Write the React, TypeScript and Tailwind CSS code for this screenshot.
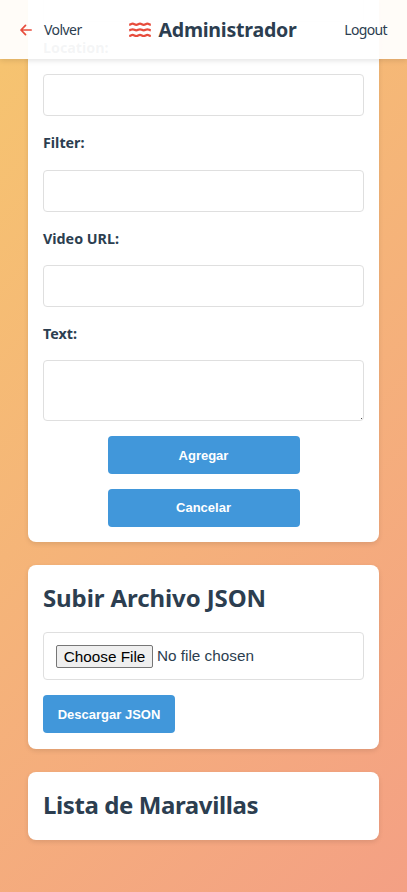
import React from "react";

const wave = "M0.2 2.8 C1.6 2.6 2.2 1.7 3.7 1.7 C5.2 1.7 5.6 2.8 7.3 2.8 C9 2.8 9.4 1.7 11 1.7 C12.6 1.7 13 2.8 14.7 2.8 C16.4 2.8 16.8 1.7 18.3 1.7 C19.8 1.7 20.4 2.6 21.8 2.8";

function Field({ label }: { label: string }) {
  return (
    <label className="block h-[95.2px] text-[14.3px] font-bold leading-[20px]">
      <span className="block h-[36.2px]">{label}</span>
      <input className="block h-[42px] w-full rounded-[4px] border border-[#dfdfdf] bg-white px-3 outline-none" />
    </label>
  );
}

const button =
  "block h-[38px] rounded-[4px] bg-[#4197da] font-['Liberation_Sans',Arial,sans-serif] text-[13px] font-bold text-white";
const card = "rounded-[8px] bg-white px-[15px] shadow-[0_2px_5px_rgba(0,0,0,0.1)]";
const heading = "whitespace-nowrap text-[24px] font-bold leading-[30px] tracking-[-0.1px]";

export default function App() {
  return (
    <div className="relative h-[892px] w-full overflow-hidden bg-[linear-gradient(135deg,#f6c56f_0%,#f4a084_100%)] font-['Noto_Sans',Tahoma,sans-serif] text-[#2c3e50]">
      <header className="absolute inset-x-0 top-0 z-10 flex h-[59px] items-center justify-between bg-white/95 px-5 pt-px shadow-[0_2px_5px_rgba(0,0,0,0.1)]">
        <a className="flex items-center text-[14px] leading-5">
          <svg width="12" height="12" viewBox="0 0 12 12" className="mr-3" fill="none" stroke="#e74c3c" strokeWidth="1.7" strokeLinecap="round" strokeLinejoin="round">
            <path d="M11.2 6H1M5.5 1.3 1 6l4.5 4.7" />
          </svg>
          <span className="tracking-[-0.55px]">Volver</span>
        </a>
        <div className="flex items-center">
          <svg width="22" height="16" viewBox="0 0 22 16" className="mr-[7px]" fill="none" stroke="#e74c3c" strokeWidth="2.2">
            <path d={wave} />
            <path d={wave} transform="translate(0 5.6)" />
            <path d={wave} transform="translate(0 11.2)" />
          </svg>
          <h1 className="text-[19.6px] font-bold leading-7 tracking-[-0.25px]">Administrador</h1>
        </div>
        <a className="text-[14px] leading-5 tracking-[-0.65px]">Logout</a>
      </header>
      <main className="flex flex-col gap-[23px] px-7">
        <section className={`${card} h-[542px] rounded-t-none`}>
          <div className="h-[38.3px] overflow-hidden">
            <div className="h-[22px] rounded-b-[4px] border border-t-0 border-[#dfdfdf]" />
          </div>
          <Field label="Location:" />
          <Field label="Filter:" />
          <Field label="Video URL:" />
          <label className="block text-[14.3px] font-bold leading-[20px]">
            <span className="block h-[36.1px]">Text:</span>
            <textarea className="block h-[61px] w-full resize-none rounded-[4px] border border-[#dfdfdf] bg-white outline-none" />
            <span className="relative z-[1] -mt-[3px] ml-auto mr-[2px] block h-[1px] w-[1px] bg-[#555]" />
          </label>
          <div className="mt-[17px] flex flex-col items-center gap-[15px]">
            <button className={`${button} w-[192px] pt-px`}>Agregar</button>
            <button className={`${button} w-[192px]`}>Cancelar</button>
          </div>
        </section>
        <section className={`${card} h-[183.5px] pt-[18px]`}>
          <h2 className={heading}>Subir Archivo JSON</h2>
          <div className="mt-[19px] flex h-[48px] items-center rounded-[4px] border border-[#dfdfdf] px-3 font-['Liberation_Sans',Arial,sans-serif] text-[15.3px]">
            <button className="mr-1 h-[23px] w-[97px] whitespace-nowrap rounded-[2px] border border-[#767676] bg-[#efefef] text-black">Choose File</button>
            <span>No file chosen</span>
          </div>
          <button className={`${button} mt-[15px] w-[132px] pt-px`}>Descargar JSON</button>
        </section>
        <section className={`${card} h-[68.5px] pt-[18px]`}>
          <h2 className="whitespace-nowrap text-[24px] font-bold leading-[30px] tracking-[-0.4px]">Lista de Maravillas</h2>
        </section>
      </main>
    </div>
  );
}
